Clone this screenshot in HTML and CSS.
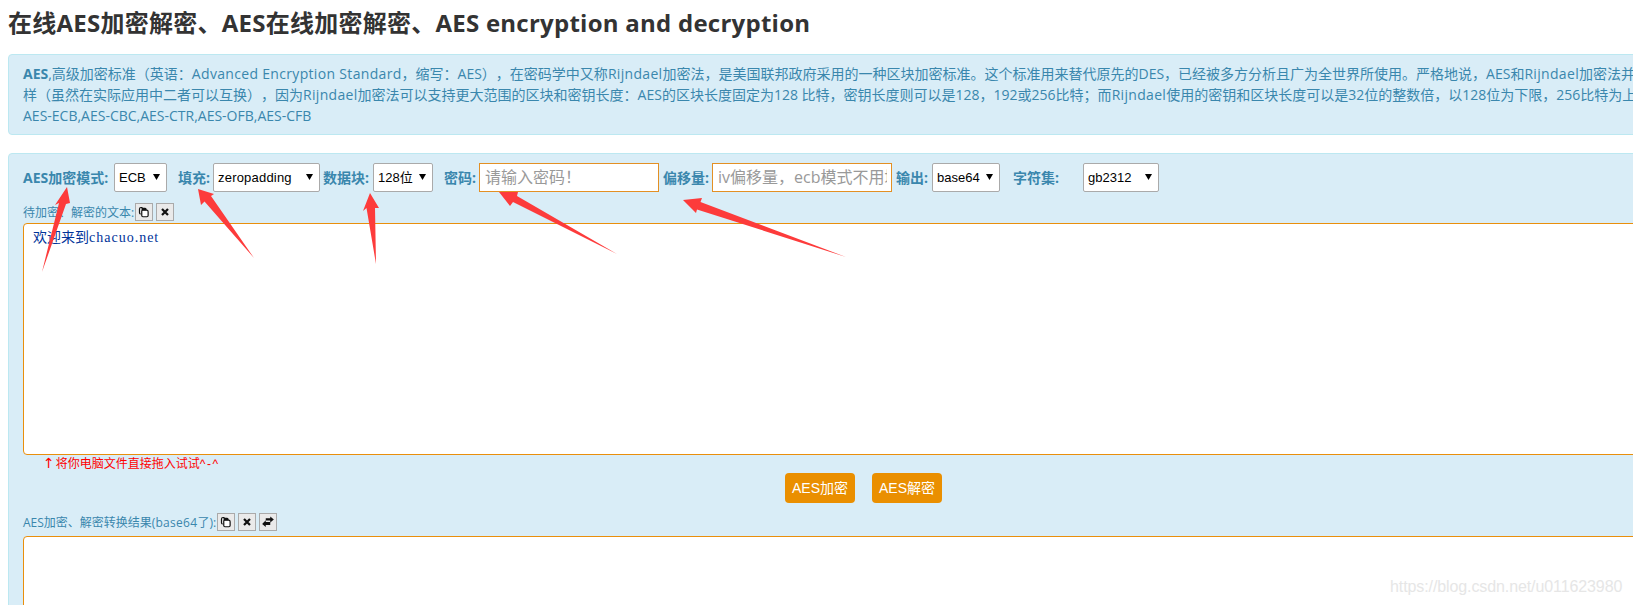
FILE: index.html
```html
<!DOCTYPE html>
<html lang="zh-CN">
<head>
<meta charset="utf-8">
<title>在线AES加密解密</title>
<link rel="stylesheet" href="styles.css">
</head>
<body>
<h1 class="title">在线AES加密解密、AES在线加密解密、AES encryption and decryption</h1>
<div class="alert">
  <div class="line"><b>AES</b>,高级加密标准（英语：<span class="en">Advanced Encryption Standard</span>，缩写：AES），在密码学中又称<span class="en">Rijndael</span>加密法，是美国联邦政府采用的一种区块加密标准。这个标准用来替代原先的DES，已经被多方分析且广为全世界所使用。严格地说，AES和<span class="en">Rijndael</span>加密法并不完全一</div>
  <div class="line">样（虽然在实际应用中二者可以互换），因为<span class="en">Rijndael</span>加密法可以支持更大范围的区块和密钥长度：AES的区块长度固定为128 比特，密钥长度则可以是128，192或256比特；而<span class="en">Rijndael</span>使用的密钥和区块长度可以是32位的整数倍，以128位为下限，256比特为上限。</div>
  <div class="line">AES-ECB,AES-CBC,AES-CTR,AES-OFB,AES-CFB</div>
</div>
<div class="panel">
  <div class="controls">
    <label class="lbl w-mode">AES加密模式:</label>
    <select class="sel s-mode"><option>ECB</option></select>
    <label class="lbl w-pad">填充:</label>
    <select class="sel s-pad"><option>zeropadding</option></select>
    <label class="lbl w-block">数据块:</label>
    <select class="sel s-block"><option>128位</option></select>
    <label class="lbl w-pass">密码:</label>
    <input class="field" type="text" placeholder="请输入密码！">
    <label class="lbl w-iv">偏移量:</label>
    <input class="field" type="text" placeholder="iv偏移量，ecb模式不用填">
    <label class="lbl w-out">输出:</label>
    <select class="sel s-out"><option>base64</option></select>
    <label class="lbl w-charset">字符集:</label>
    <select class="sel s-charset"><option>gb2312</option></select>
  </div>
  <div class="toolrow first">
    <span class="small">待加密、解密的文本:</span>
    <button class="tool"><svg viewBox="0 0 16 16" class="ico"><path d="M6 2h-2a2 2 0 0 0-2 2v5a2 2 0 0 0 1.500 1.900" fill="none" stroke="#111" stroke-width="1.600"/><path d="M6 5.500h5.500a2 2 0 0 1 2 2v5.200a1.600 1.600 0 0 1-1.600 1.600h-5.300a1.600 1.600 0 0 1-1.600-1.600v-5.700a1.500 1.500 0 0 1 1-1.500z" fill="#fff" stroke="#111" stroke-width="1.600"/><path d="M4.500 2.200h5a2 2 0 0 1 2 2v1.500h-6.500z" fill="#111"/></svg></button>
    <button class="tool"><svg viewBox="0 0 16 16" class="ico"><path d="M4 4l8 8M12 4l-8 8" stroke="#111" stroke-width="3" fill="none"/></svg></button>
  </div>
  <div class="box box-source"><span class="cjk">欢迎来到</span><span class="mono">chacuo.net</span></div>
  <div class="hint"><span class="hint-arrow">↑</span>将你电脑文件直接拖入试试<span class="hint-face">^-^</span></div>
  <div class="actions">
    <button class="btn">AES加密</button>
    <button class="btn">AES解密</button>
  </div>
  <div class="toolrow second">
    <span class="small">AES加密、解密转换结果(<span class="en-small">base64</span>了):</span>
    <button class="tool"><svg viewBox="0 0 16 16" class="ico"><path d="M6 2h-2a2 2 0 0 0-2 2v5a2 2 0 0 0 1.500 1.900" fill="none" stroke="#111" stroke-width="1.600"/><path d="M6 5.500h5.500a2 2 0 0 1 2 2v5.200a1.600 1.600 0 0 1-1.600 1.600h-5.300a1.600 1.600 0 0 1-1.600-1.600v-5.700a1.500 1.500 0 0 1 1-1.500z" fill="#fff" stroke="#111" stroke-width="1.600"/><path d="M4.500 2.200h5a2 2 0 0 1 2 2v1.500h-6.500z" fill="#111"/></svg></button>
    <button class="tool"><svg viewBox="0 0 16 16" class="ico"><path d="M4 4l8 8M12 4l-8 8" stroke="#111" stroke-width="3" fill="none"/></svg></button>
    <button class="tool"><svg viewBox="0 0 16 16" class="ico"><path d="M5 3h6V.5L15.800 4.500 11 8.500V6H5zM11 8H5V5.500L.2 10.500 5 14.500V12h6z" fill="#111"/></svg></button>
  </div>
  <div class="box box-result"></div>
</div>
<svg class="arrows" viewBox="0 0 1633 605" aria-hidden="true">
  <polygon points="67,187 55,205 59,203 42,272 66,204 70,203"/>
  <polygon points="198,189 201,205 204.500,201.500 254,258 211,196 214,194"/>
  <polygon points="370,193 363,211 366.500,208 376,264 375,208 379,208"/>
  <polygon points="499,192 510,206 513,202 617,254 517,196 518,192"/>
  <polygon points="683,200 696,213 697,209.500 846,257 700.500,202 702,198"/>
</svg>
<div class="watermark">https://blog.csdn.net/u011623980</div>
</body>
</html>
```
FILE: styles.css
```css
html, body {
  margin: 0;
  padding: 0;
  height: 605px;
  overflow: hidden;
  background: #fff;
}
body {
  position: relative;
  width: 1633px;
  font-family: "Open Sans", "Noto Sans CJK SC", sans-serif;
  font-size: 14px;
  color: #333;
  text-spacing-trim: space-all;
}
.title {
  margin: 0;
  padding: 6px 8px 0;
  height: 48px;
  box-sizing: border-box;
  font-size: 24px;
  line-height: 34px;
  font-weight: 700;
  letter-spacing: 0.25px;
  color: #333;
  white-space: nowrap;
}
.alert {
  width: 1711px;
  margin-left: 8px;
  box-sizing: border-box;
  height: 81px;
  margin-top: 6px;
  padding: 8px 14px;
  background: #d9edf7;
  border: 1px solid #bce8f1;
  border-radius: 4px;
  color: #3a87ad;
}
.line {
  height: 21px;
  line-height: 21px;
  white-space: nowrap;
}
.en {
  letter-spacing: 0.32px;
}
.panel {
  width: 1711px;
  margin-left: 8px;
  margin-top: 18px;
  box-sizing: border-box;
  height: 600px;
  padding: 8px 14px;
  background: #d9edf7;
  border: 1px solid #bce8f1;
  border-radius: 4px;
  color: #3a87ad;
}
.controls {
  display: flex;
  align-items: center;
  height: 30px;
}
.lbl {
  font-size: 14px;
  font-weight: 700;
  white-space: nowrap;
  flex: none;
}
.w-mode { width: 91px; }
.w-pad { width: 35px; margin-left: 11px; }
.w-block { width: 50px; margin-left: 3px; }
.w-pass { width: 35px; margin-left: 11px; }
.w-iv { width: 49px; margin-left: 4px; }
.w-out { width: 36px; margin-left: 4px; }
.w-charset { width: 70px; margin-left: 13px; }
.sel {
  flex: none;
  appearance: none;
  height: 29px;
  box-sizing: border-box;
  border: 1px solid #aaa;
  background-color: #fff;
  background-image: url("data:image/svg+xml,%3Csvg xmlns='http://www.w3.org/2000/svg' width='7' height='6'%3E%3Cpath d='M0 0h7L3.500 6z' fill='%23000'/%3E%3C/svg%3E");
  background-repeat: no-repeat;
  background-position: right 6px center;
  color: #000;
  font-family: "Liberation Sans", "Noto Sans CJK SC", sans-serif;
  font-size: 13px;
  border-radius: 2px;
  padding: 0 0 0 4px;
}
.s-mode { width: 53px; }
.s-pad { width: 107px; letter-spacing: 0.2px; }
.s-block { width: 60px; }
.s-out { width: 68px; }
.s-charset { width: 76px; }
.field {
  flex: none;
  width: 180px;
  height: 29px;
  box-sizing: border-box;
  border: 1px solid #e39024;
  padding: 0 4px 0 5px;
  background: #fff;
  font-family: "Open Sans", "Noto Sans CJK SC", sans-serif;
  font-size: 16px;
}
.field::placeholder {
  color: #999;
  opacity: 1;
}
.toolrow {
  display: flex;
  align-items: center;
  height: 18px;
  gap: 3px;
}
.toolrow.first { margin-top: 11px; }
.toolrow.second { margin-top: 10px; }
.small {
  font-size: 12px;
  white-space: nowrap;
  margin-right: -2px;
}
.en-small {
  letter-spacing: 0.3px;
}
.tool {
  flex: none;
  width: 18px;
  height: 18px;
  box-sizing: border-box;
  padding: 0;
  border: 1px solid #aaa;
  background: #eaeaea;
  display: flex;
  align-items: center;
  justify-content: center;
}
.ico {
  width: 12px;
  height: 12px;
  display: block;
}
.box {
  box-sizing: border-box;
  background: #fff;
  border: 1px solid #e98f0c;
  border-radius: 4px;
  padding: 3px 9px;
  color: #003399;
  line-height: 18px;
}
.box-source {
  height: 232px;
  margin-top: 2px;
}
.box-result {
  height: 200px;
  margin-top: 5px;
}
.cjk {
  font-family: "Noto Sans CJK SC", sans-serif;
  font-size: 14px;
}
.mono {
  font-family: "Liberation Serif", serif;
  font-size: 14px;
  letter-spacing: 1px;
}
.hint {
  height: 18px;
  padding-left: 20px;
  font-size: 12px;
  line-height: 16px;
  color: #f00;
  font-family: "Liberation Sans", "Noto Sans CJK SC", sans-serif;
  white-space: nowrap;
}
.hint-arrow {
  font-family: "DejaVu Sans", sans-serif;
  font-size: 14px;
  line-height: 16px;
  margin-right: 1px;
}
.hint-face {
  letter-spacing: 1.5px;
}
.actions {
  display: flex;
  justify-content: center;
  gap: 17px;
  height: 30px;
}
.btn {
  width: 70px;
  height: 30px;
  padding: 0 0 2px;
  border: 0;
  border-radius: 4px;
  background: #ea8f00;
  color: #fff;
  font-family: "Liberation Sans", "Noto Sans CJK SC", sans-serif;
  font-size: 14px;
}
.arrows {
  position: absolute;
  left: 0;
  top: 0;
  width: 1633px;
  height: 605px;
  pointer-events: none;
}
.arrows polygon {
  fill: #fd3b3b;
}
.watermark {
  position: absolute;
  left: 1390px;
  top: 575px;
  font-family: "Liberation Sans", sans-serif;
  font-size: 16px;
  line-height: 24px;
  letter-spacing: -0.1px;
  color: #e6e6e6;
  white-space: nowrap;
}
```
